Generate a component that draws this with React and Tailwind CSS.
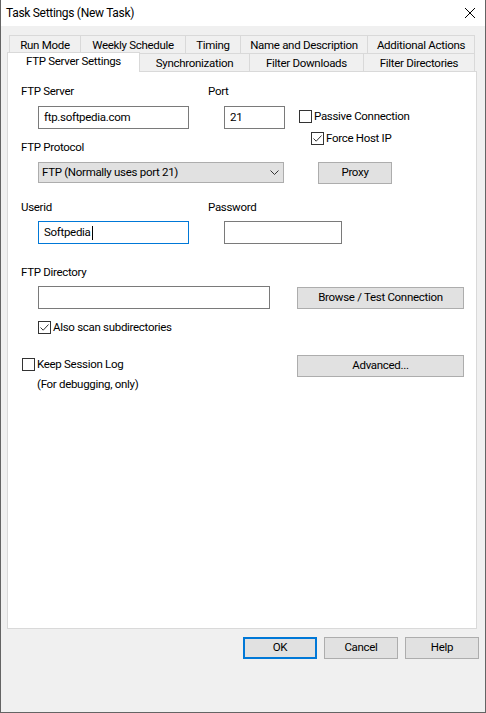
import React from "react";

const F = "[font-family:Roboto,'Noto_Sans',sans-serif]";

function Check({ checked }) {
  return (
    <span className="w-[13px] h-[13px] border border-[#333333] bg-white flex items-center justify-center shrink-0">
      {checked && (
        <svg width="11" height="11" viewBox="0 0 11 11">
          <path d="M1.5 5.5 L4.2 8.2 L9.5 2.5" stroke="#333333" fill="none" strokeWidth="1" />
        </svg>
      )}
    </span>
  );
}

function Btn({ children, className = "" }) {
  return (
    <div className={"h-[22px] bg-[#e1e1e1] border border-[#adadad] flex items-center justify-center text-black " + className}>
      {children}
    </div>
  );
}

function Input({ children, className = "", focus = false }) {
  return (
    <div
      className={
        "h-[23px] bg-white border flex items-center pl-[5px] text-black " +
        (focus ? "border-[#0078d7] " : "border-[#7a7a7a] ") +
        className
      }
    >
      {children}
    </div>
  );
}

function Tab({ children, className = "" }) {
  return (
    <div className={"h-[18px] flex items-center justify-center bg-[#f0f0f0] border-[#d9d9d9] text-black leading-none " + className}>
      {children}
    </div>
  );
}

export default function App() {
  return (
    <div className={"w-[486px] h-[713px] flex flex-col border-l border-r border-b border-[#646464] bg-[#f0f0f0] text-black text-[11.5px] tracking-[-0.3px] " + F}>
      {/* title bar */}
      <div className="h-[26px] bg-white flex items-center justify-between shrink-0">
        <span className="pl-[5px] text-[12px] leading-none">Task Settings (New Task)</span>
        <svg width="12" height="12" viewBox="0 0 12 12" className="mr-[9px]">
          <path d="M1 1 L11 11 M11 1 L1 11" stroke="#000" strokeWidth="1" />
        </svg>
      </div>

      {/* body */}
      <div className="flex flex-col flex-1">
        {/* tabs */}
        <div className="mt-[9px] ml-[8px] flex h-[18px]">
          <Tab className="w-[71px] border-l border-t pt-[2px]">Run Mode</Tab>
          <Tab className="w-[105px] border-l border-t pt-[2px]">Weekly Schedule</Tab>
          <Tab className="w-[55px] border-l border-t pt-[2px]">Timing</Tab>
          <Tab className="w-[127px] border-l border-t pt-[2px]">Name and Description</Tab>
          <Tab className="w-[108px] border-l border-t border-r pt-[2px]">Additional Actions</Tab>
        </div>
        <div className="-mt-[1px] ml-[6px] flex h-[19px] items-start">
          <div className="relative z-10 w-[133px] h-[20px] bg-white border-l border-t border-r border-[#d9d9d9] flex items-center justify-center leading-none pb-[2px]">
            FTP Server Settings
          </div>
          <Tab className="mt-[1px] w-[110px] border-t border-r pt-[2px]">Synchronization</Tab>
          <Tab className="mt-[1px] w-[114px] border-t border-r pt-[2px]">Filter Downloads</Tab>
          <Tab className="mt-[1px] w-[111px] border-t border-r pt-[2px]">Filter Directories</Tab>
        </div>

        {/* panel */}
        <div className="ml-[6px] w-[470px] h-[558px] bg-white border border-[#d9d9d9] flex flex-col">
          {/* section 1 */}
          <div className="mt-[11px] flex items-start">
            <div className="w-[291px] flex flex-col">
              <div className="flex h-[16px] items-center pt-[2px]">
                <span className="w-[200px] pl-[13px]">FTP Server</span>
                <span>Port</span>
              </div>
              <div className="mt-[7px] flex">
                <Input className="ml-[30px] w-[151px]">ftp.softpedia.com</Input>
                <Input className="ml-[35px] w-[61px]">21</Input>
              </div>
              <div className="mt-[10px] h-[16px] flex items-center pl-[13px] pt-[2px]">FTP Protocol</div>
              <div className="mt-[7px] ml-[30px] w-[246px] h-[21px] bg-[#e1e1e1] border border-[#adadad] flex items-center justify-between pl-[3px] pr-[4px]">
                <span>FTP (Normally uses port 21)</span>
                <svg width="9" height="5" viewBox="0 0 9 5">
                  <path d="M0.5 0.5 L4.5 4.5 L8.5 0.5" stroke="#333" fill="none" strokeWidth="1" />
                </svg>
              </div>
            </div>
            <div className="flex flex-col">
              <div className="mt-[27px] flex items-center gap-[2px] h-[13px]">
                <Check />
                <span>Passive Connection</span>
              </div>
              <div className="mt-[9px] ml-[12px] flex items-center gap-[2px] h-[13px]">
                <Check checked />
                <span>Force Host IP</span>
              </div>
              <Btn className="mt-[17px] ml-[19px] w-[74px]">Proxy</Btn>
            </div>
          </div>

          {/* section 2 */}
          <div className="mt-[15px] flex h-[16px] items-center pt-[2px]">
            <span className="w-[200px] pl-[13px]">Userid</span>
            <span>Password</span>
          </div>
          <div className="mt-[6px] flex">
            <Input focus className="ml-[30px] w-[151px]">
              Softpedia<span className="inline-block w-px h-[14px] bg-black ml-[1px]" />
            </Input>
            <Input className="ml-[35px] w-[118px]" />
          </div>
          <div className="mt-[20px] h-[16px] flex items-center pl-[13px] pt-[2px]">FTP Directory</div>
          <div className="mt-[6px] flex items-center">
            <Input className="ml-[30px] w-[232px]" />
            <Btn className="ml-[27px] w-[167px]">Browse / Test Connection</Btn>
          </div>
          <div className="mt-[12px] ml-[30px] flex items-center gap-[2px] h-[13px]">
            <Check checked />
            <span>Also scan subdirectories</span>
          </div>
          <div className="mt-[21px] flex items-start">
            <div className="w-[289px] flex flex-col">
              <div className="mt-[3px] ml-[14px] flex items-center gap-[2px] h-[13px]">
                <Check />
                <span>Keep Session Log</span>
              </div>
              <div className="mt-[5px] ml-[29px] h-[16px] flex items-center pt-[1px]">(For debugging, only)</div>
            </div>
            <Btn className="w-[167px]">Advanced...</Btn>
          </div>
        </div>

        {/* bottom buttons */}
        <div className="mt-[8px] mr-[6px] flex justify-end gap-[7px]">
          <div className="w-[74px] h-[22px] bg-[#e1e1e1] border-2 border-[#0078d7] flex items-center justify-center">OK</div>
          <Btn className="w-[74px]">Cancel</Btn>
          <Btn className="w-[74px]">Help</Btn>
        </div>
      </div>
    </div>
  );
}
